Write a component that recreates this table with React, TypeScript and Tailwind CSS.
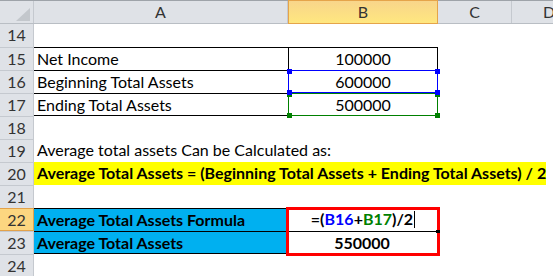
import React from 'react';

type RowProps = { n: number; active?: boolean; first?: boolean; children?: React.ReactNode };

// row number + cells
const Row = ({ n, active, first, children }: RowProps) => {
  const numCls = active
    ? 'bg-[#fcd680] border-[#e3a24a] border-y border-r'
    : `bg-[#dfe2e7] border-[#c5c9cf] border-r ${first ? '' : 'border-t'}`;
  return (
    <div className="flex h-[23px] leading-[22px]">
      <div className={`w-[34px] shrink-0 text-center text-[#333] ${numCls}`}>{n}</div>
      {children}
    </div>
  );
};

const App = () => {
  return (
    <div className="relative w-[553px] h-[276px] overflow-hidden bg-white text-[16px] text-black font-[family-name:Lato,sans-serif]">
      {/* Column headers */}
      <div className="flex h-[24px] border-t border-b border-t-[#9ea3a9] border-b-[#b9bec4] bg-[#dfe2e7] text-[#333] leading-[22px]">
        <div className="relative w-[34px] shrink-0 border-r border-[#c5c9cf]">
          <svg className="absolute right-[3px] bottom-[2px]" width="14" height="13" viewBox="0 0 14 13">
            <polygon points="14,0 14,13 0,13" fill="#c3c7cc" />
          </svg>
        </div>
        <div className="w-[254px] shrink-0 border-r border-[#c5c9cf] text-center">A</div>
        <div className="w-[150px] shrink-0 -mt-px h-[24px] border border-[#e5a44a] bg-gradient-to-b from-[#f8d58a] to-[#ffe77f] text-center leading-[22px]">B</div>
        <div className="w-[74px] shrink-0 border-r border-[#c5c9cf] text-center">C</div>
        <div className="w-[74px] shrink-0 text-center">D</div>
      </div>

      <Row n={14} first />
      <Row n={15}>
        <div className="w-[254px] shrink-0 border-t border-black pl-[3px]">Net Income</div>
        <div className="w-[150px] shrink-0 border-t border-x border-black text-center">100000</div>
      </Row>
      <Row n={16}>
        <div className="w-[254px] shrink-0 border-t border-black pl-[3px]">Beginning Total Assets</div>
        <div className="relative w-[150px] shrink-0 border border-[#0000ff] text-center leading-[21px]">
          600000
          <span className="absolute z-10 -left-[2px] -top-[2px] w-[5px] h-[5px] bg-[#0000ff]" />
          <span className="absolute z-10 -right-[3px] -top-[2px] w-[5px] h-[5px] bg-[#0000ff]" />
          <span className="absolute z-10 -left-[2px] -bottom-[3px] w-[5px] h-[5px] bg-[#0000ff]" />
          <span className="absolute z-10 -right-[3px] -bottom-[3px] w-[5px] h-[5px] bg-[#0000ff]" />
        </div>
      </Row>
      <Row n={17}>
        <div className="w-[254px] shrink-0 border-y border-black pl-[3px] leading-[21px]">Ending Total Assets</div>
        <div className="relative w-[150px] shrink-0 border border-[#008000] text-center leading-[21px]">
          500000
          <span className="absolute -left-[2px] -top-[1px] w-[5px] h-[4px] bg-[#008000]" />
          <span className="absolute -right-[3px] -top-[1px] w-[5px] h-[4px] bg-[#008000]" />
          <span className="absolute -left-[2px] -bottom-[3px] w-[5px] h-[5px] bg-[#008000]" />
          <span className="absolute -right-[3px] -bottom-[3px] w-[5px] h-[5px] bg-[#008000]" />
        </div>
      </Row>
      <Row n={18} />
      <Row n={19}>
        <div className="pl-[3px] whitespace-nowrap">Average total assets Can be Calculated as:</div>
      </Row>
      <Row n={20}>
        <div className="w-[512px] shrink-0 bg-[#ffff00] pl-[3px] font-bold whitespace-nowrap">
          Average Total Assets = (Beginning Total Assets + Ending Total Assets) / 2
        </div>
      </Row>
      <Row n={21} />
      <Row n={22} active>
        <div className="w-[254px] shrink-0 border-t border-black bg-[#00b0f0] pl-[3px] font-bold">
          Average Total Assets Formula
        </div>
        <div className="relative w-[150px] shrink-0 text-center font-bold">
          =(<span className="text-[#0000ff]">B16</span>+<span className="text-[#008000]">B17</span>)/2
          <span className="inline-block align-[-3px] ml-px w-px h-[17px] bg-black" />
          <span className="pointer-events-none absolute -left-[2px] -top-[1px] w-[154px] h-[49px] border-[3px] border-[#ff0000]" />
          <span className="absolute left-[148px] top-[22px] w-[4px] h-[3px] bg-black" />
        </div>
      </Row>
      <Row n={23}>
        <div className="w-[254px] shrink-0 border-y border-black bg-[#00b0f0] pl-[3px] font-bold leading-[21px]">
          Average Total Assets
        </div>
        <div className="w-[148px] shrink-0 border-t border-black text-center font-bold">550000</div>
      </Row>
      <Row n={24} />
    </div>
  );
};

export default App;
